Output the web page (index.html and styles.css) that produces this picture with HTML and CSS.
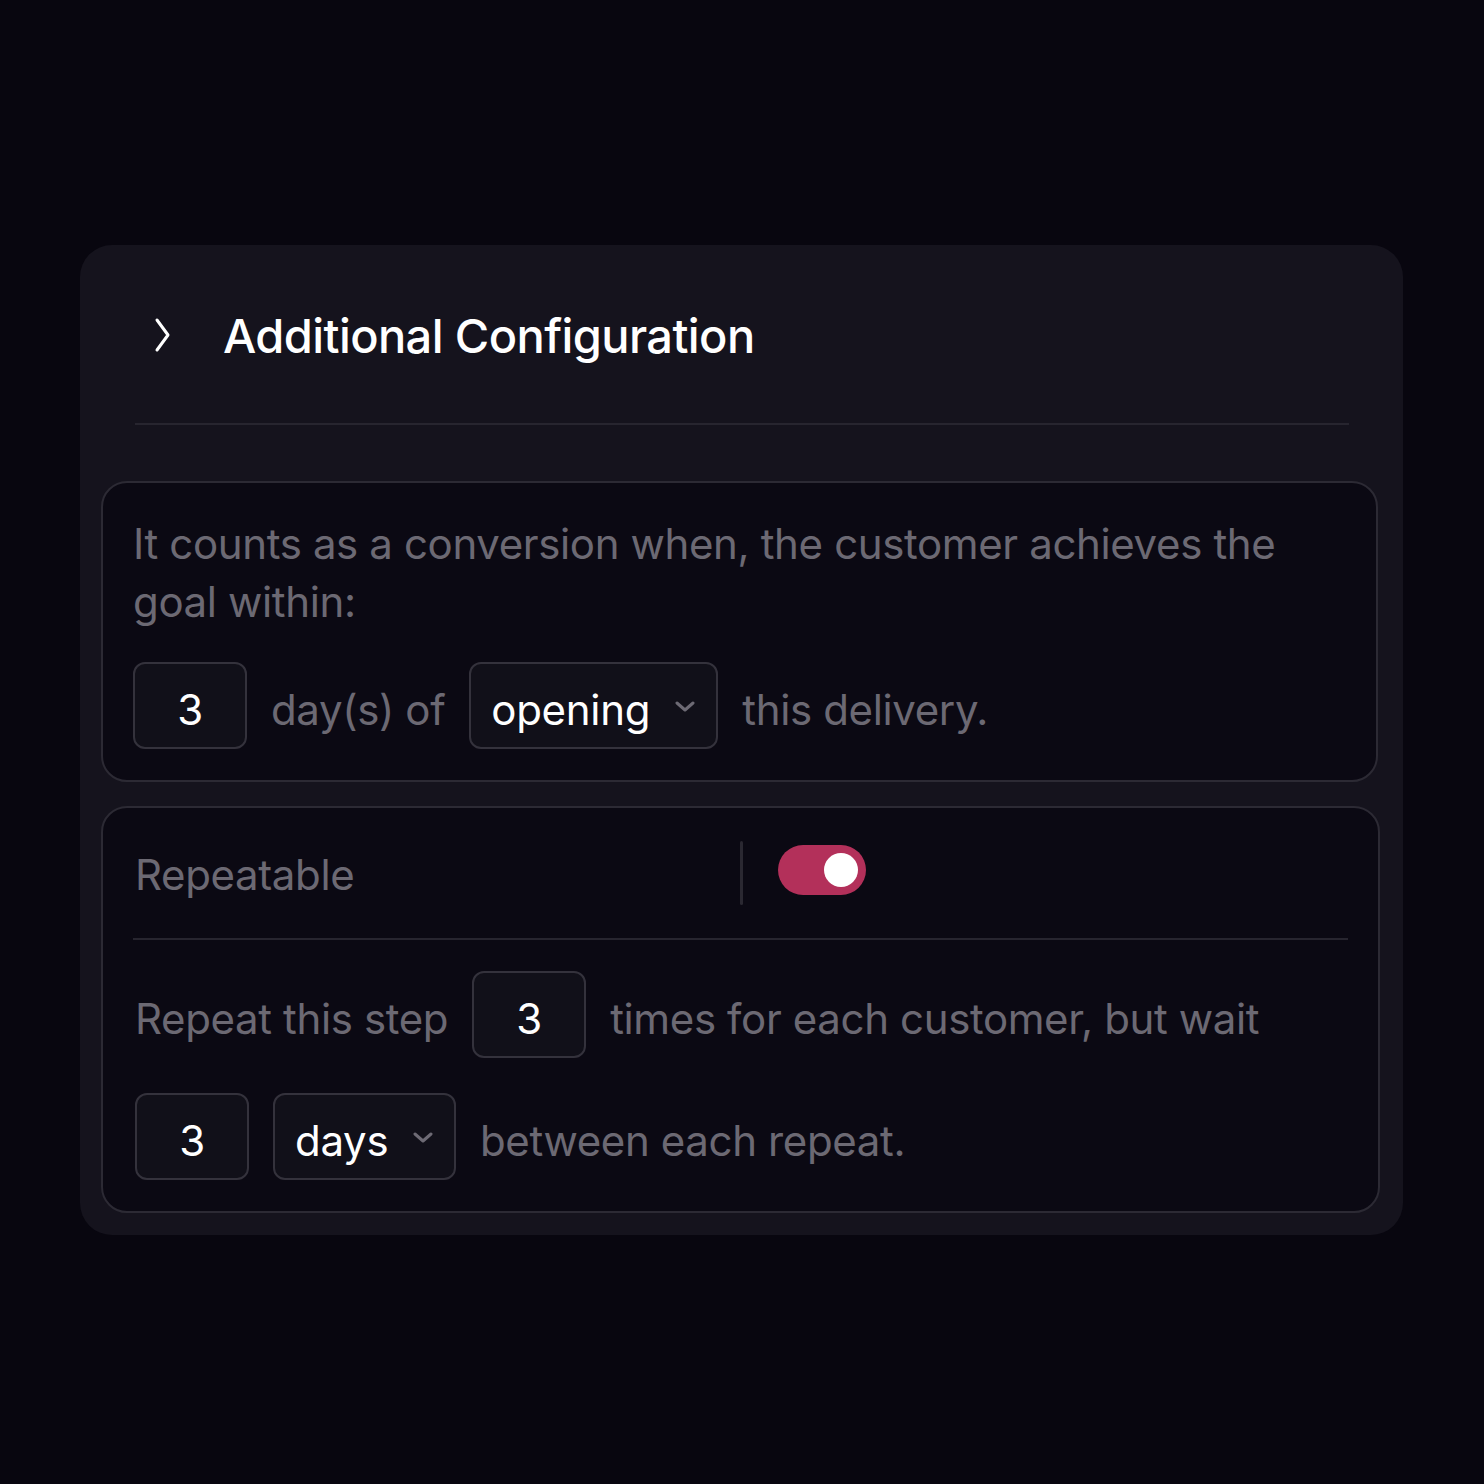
FILE: index.html
```html
<!DOCTYPE html>
<html>
<head>
<meta charset="utf-8">
<link rel="stylesheet" href="styles.css">
</head>
<body>
<div class="card">
  <div class="header">
    <svg class="chev" width="20" height="36" viewBox="0 0 20 36"><path d="M4 3 L15 18 L4 33" fill="none" stroke="#ffffff" stroke-width="3" stroke-linecap="round" stroke-linejoin="round"/></svg>
    <h1 class="title">Additional Configuration</h1>
  </div>
  <div class="rule"></div>
  <div class="box box1">
    <p class="desc">It counts as a conversion when, the customer achieves the goal within:</p>
    <div class="row">
      <div class="field num">3</div>
      <span class="muted">day(s) of</span>
      <div class="field select sel-open"><span>opening</span><svg class="dd" width="22" height="12" viewBox="0 0 22 12"><path d="M3 2 L11 9 L19 2" fill="none" stroke="#6d6a74" stroke-width="3" stroke-linecap="round" stroke-linejoin="round"/></svg></div>
      <span class="muted">this delivery.</span>
    </div>
  </div>
  <div class="box box2">
    <div class="toggle-row">
      <span class="muted label">Repeatable</span>
      <div class="vsep"></div>
      <div class="toggle"><div class="knob"></div></div>
    </div>
    <div class="rule inner"></div>
    <div class="row r1">
      <span class="muted">Repeat this step</span>
      <div class="field num">3</div>
      <span class="muted">times for each customer, but wait</span>
    </div>
    <div class="row r2">
      <div class="field num">3</div>
      <div class="field select sel-days"><span>days</span><svg class="dd" width="22" height="12" viewBox="0 0 22 12"><path d="M3 2 L11 9 L19 2" fill="none" stroke="#6d6a74" stroke-width="3" stroke-linecap="round" stroke-linejoin="round"/></svg></div>
      <span class="muted">between each repeat.</span>
    </div>
  </div>
</div>
</body>
</html>
```

FILE: styles.css
```css
* { box-sizing: border-box; }
html, body { margin: 0; padding: 0; }
body {
  background: #08060f;
  font-family: Inter, "Noto Sans", sans-serif;
  width: 1484px;
  height: 1484px;
  padding-top: 245px;
  padding-left: 80px;
}
.card {
  width: 1323px;
  height: 990px;
  background: #15131d;
  border-radius: 32px;
  padding: 0 25px 0 21px;
}
.header {
  display: flex;
  align-items: center;
  height: 178px;
  padding-left: 52px;
}
.chev { margin-top: 2px; }
.title {
  margin: 0 0 0 50px;
  font-weight: 500;
  font-size: 47px;
  color: #ffffff;
  letter-spacing: -0.6px;
  padding-top: 2px;
}
.rule {
  height: 2px;
  background: #27252f;
  margin: 0 29px 0 34px;
}
.box {
  background: #0b0913;
  border: 2px solid #2c2a34;
  border-radius: 26px;
}
.box1 {
  margin-top: 56px;
  height: 301px;
  padding: 32px 30px 0 30px;
}
.desc {
  margin: 0;
  font-size: 42px;
  line-height: 58px;
  color: #6c6973;
  letter-spacing: -0.37px;
}
.muted {
  font-size: 42px;
  color: #6c6973;
  letter-spacing: -0.37px;
  padding-top: 8px;
}
.row {
  display: flex;
  align-items: center;
  gap: 24px;
}
.box1 .row { margin-top: 31px; }
.field {
  height: 87px;
  border: 2px solid #34323c;
  border-radius: 12px;
  background: #111019;
  color: #ffffff;
  font-size: 42px;
  display: flex;
  align-items: center;
  letter-spacing: -0.3px;
  padding-top: 8px;
}
.num {
  width: 114px;
  justify-content: center;
}
.select {
  padding-left: 20px;
  padding-right: 20px;
  justify-content: space-between;
}
.sel-open { width: 249px; }
.sel-days { width: 183px; }
.dd { margin-top: -6px; }
.box2 {
  margin-top: 24px;
  margin-right: -2px;
  height: 407px;
  padding: 0 30px 0 32px;
}
.toggle-row {
  display: flex;
  align-items: center;
  height: 130px;
}
.label { width: 605px; padding-top: 2px; }
.vsep {
  width: 3px;
  height: 64px;
  background: #2a2831;
  border-radius: 2px;
}
.toggle {
  margin-left: 35px;
  width: 88px;
  height: 50px;
  border-radius: 25px;
  background: #b3305a;
  position: relative;
  margin-top: -6px;
}
.knob {
  position: absolute;
  right: 8px;
  top: 8px;
  width: 34px;
  height: 34px;
  border-radius: 50%;
  background: #ffffff;
}
.rule.inner {
  margin: 0 0 0 -2px;
  width: 1215px;
}
.r1 { margin-top: 31px; }
.r2 { margin-top: 35px; }
```
